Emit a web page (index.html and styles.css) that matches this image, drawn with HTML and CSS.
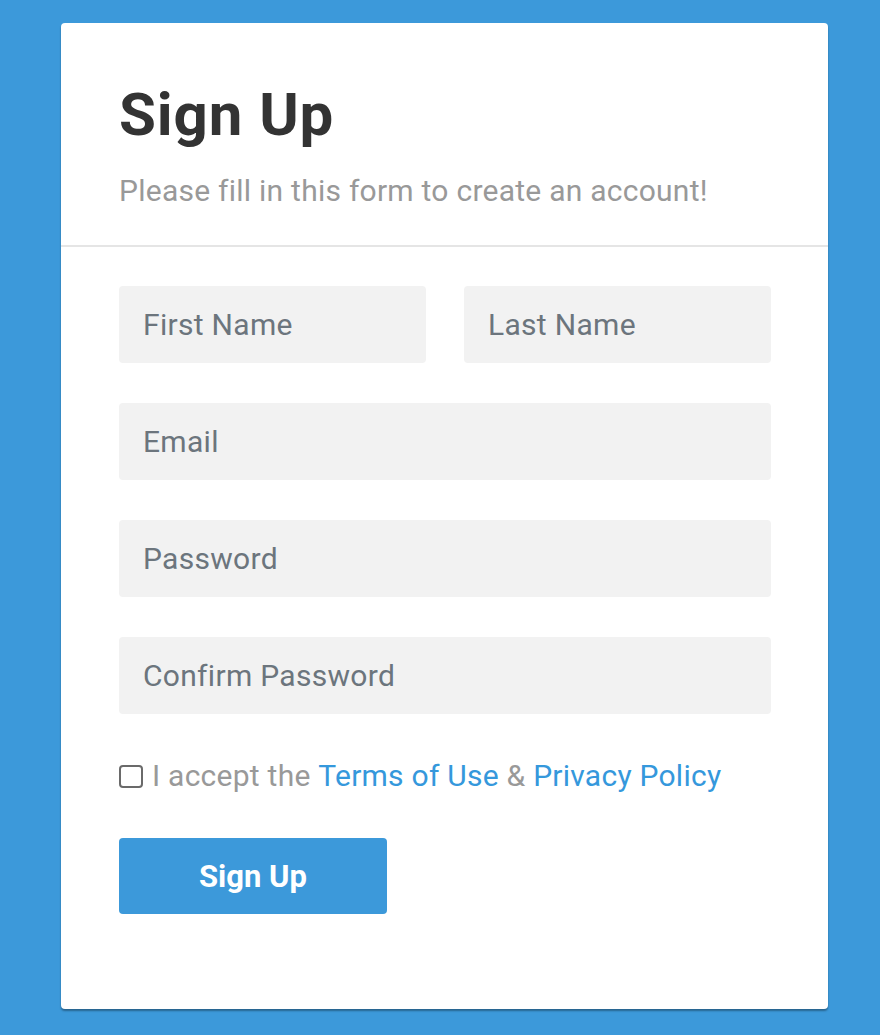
FILE: index.html
```html
<!DOCTYPE html>
<html>
<head>
<meta charset="utf-8">
<link rel="stylesheet" href="styles.css">
</head>
<body>
<div class="card">
  <div class="head">
    <h1 class="title">Sign Up</h1>
    <p class="subtitle">Please fill in this form to create an account!</p>
  </div>
  <form class="form">
    <div class="row two">
      <input class="field" type="text" placeholder="First Name">
      <input class="field" type="text" placeholder="Last Name">
    </div>
    <div class="row"><input class="field" type="email" placeholder="Email"></div>
    <div class="row"><input class="field" type="password" placeholder="Password"></div>
    <div class="row"><input class="field" type="password" placeholder="Confirm Password"></div>
    <label class="accept"><span class="box"></span>I accept the <a href="#">Terms of Use</a> &amp; <a href="#">Privacy Policy</a></label>
    <button class="btn" type="button">Sign Up</button>
  </form>
</div>
</body>
</html>
```
FILE: styles.css
```css
html, body { margin: 0; padding: 0; }
body {
  background: #3c99da;
  font-family: Roboto, "Liberation Sans", sans-serif;
  height: 1035px;
  overflow: hidden;
}
.card {
  margin: 23px 0 0 61px;
  width: 767px;
  height: 986px;
  background: #fff;
  border-radius: 4px;
  box-shadow: 0 2px 2px rgba(0,0,0,0.35);
  box-sizing: border-box;
}
.head {
  padding: 62px 58px 37px;
  border-bottom: 2px solid #e5e5e5;
}
.title {
  margin: 0;
  font-size: 60px;
  line-height: 60px;
  font-weight: 700;
  letter-spacing: 0.9px;
  color: #333;
}
.subtitle {
  margin: 29px 0 0;
  font-size: 30px;
  line-height: 34px;
  letter-spacing: 0.25px;
  color: #999;
}
.form {
  padding: 39px 57px 0 58px;
  display: flex;
  flex-direction: column;
}
.row { display: flex; gap: 38px; margin-bottom: 40px; }
.field {
  flex: 1;
  min-width: 0;
  height: 77px;
  box-sizing: border-box;
  border: none;
  border-radius: 4px;
  background: #f2f2f2;
  padding: 0 24px;
  font-family: inherit;
  font-size: 30px;
  letter-spacing: 0.3px;
  color: #6c757d;
  outline: none;
}
.field::placeholder { color: #6c757d; opacity: 1; }
.accept {
  display: flex;
  align-items: center;
  font-size: 30px;
  line-height: 34px;
  letter-spacing: 0.25px;
  color: #999;
  margin-top: 5px;
  white-space: pre;
}
.box {
  width: 24px;
  height: 23px;
  border: 2px solid #6a6a6a;
  border-radius: 4px;
  margin-right: 9px;
  box-sizing: border-box;
  flex: none;
}
.accept a { color: #3598dc; text-decoration: none; }
.btn {
  margin-top: 45px;
  width: 268px;
  height: 76px;
  border: none;
  border-radius: 4px;
  background: #3c99da;
  color: #fff;
  font-family: inherit;
  font-weight: 700;
  font-size: 31px;
}
```
